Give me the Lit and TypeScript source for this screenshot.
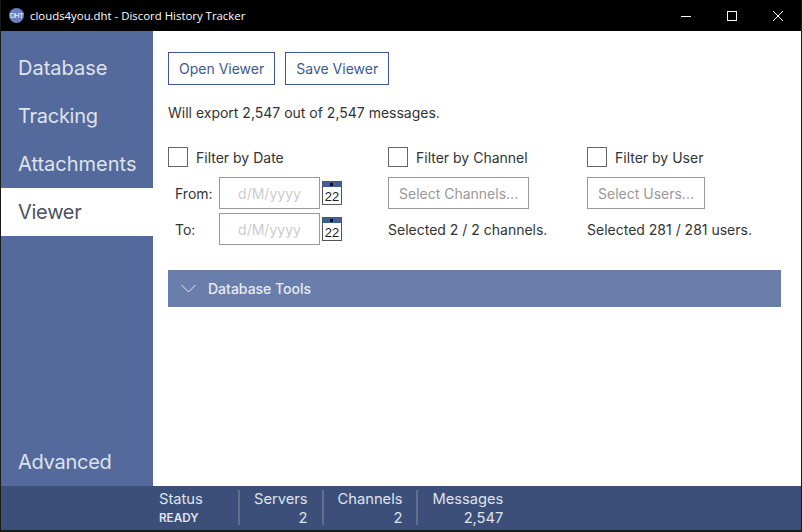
import { LitElement, html, css } from 'lit';
import { customElement } from 'lit/decorators.js';

const calendar = html`
  <svg class="calendar" width="20" height="24" viewBox="0 0 20 24">
    <rect x="0.5" y="0.5" width="19" height="23" fill="#fff" stroke="#555"></rect>
    <rect x="1" y="1" width="18" height="5" fill="#3f5f99"></rect>
    <rect x="8" y="2" width="3" height="3" fill="#111"></rect>
    <text x="10" y="20" text-anchor="middle">22</text>
  </svg>
`;

@customElement('app-root')
export class AppRoot extends LitElement {
  static styles = css`
    :host {
      display: flex;
      flex-direction: column;
      width: 802px;
      height: 532px;
      box-sizing: border-box;
      border: 1px solid #1a1a1a;
      border-top: 0;
      background: #000;
      overflow: hidden;
      font-family: Inter, 'Noto Sans', sans-serif;
      font-size: 14px;
      color: #333;
    }

    .titlebar {
      display: flex;
      align-items: center;
      height: 31px;
      flex: none;
      background: #000;
      color: #fff;
      font-family: 'Open Sans', 'Noto Sans', sans-serif;
      font-size: 11.4px;
    }

    .logo {
      display: flex;
      align-items: center;
      justify-content: center;
      width: 15px;
      height: 15px;
      margin: 0 6px 0 8px;
      border-radius: 50%;
      background: #6a7fc0;
      font-family: 'Liberation Sans', sans-serif;
      font-size: 7px;
      letter-spacing: -0.4px;
      color: #fff;
    }

    .title {
      flex: 1;
    }

    .winbtn {
      display: flex;
      align-items: center;
      justify-content: center;
      width: 46px;
      height: 31px;
    }

    .main {
      display: flex;
      flex: 1;
      min-height: 0;
      background: #fff;
    }

    .sidebar {
      display: flex;
      flex-direction: column;
      flex: none;
      width: 152px;
      padding-top: 13px;
      box-sizing: border-box;
      background: #546a9c;
    }

    .tab {
      height: 48px;
      line-height: 49px;
      padding-left: 17px;
      font-size: 20px;
      color: #dfe3ec;
    }

    .tab.active {
      background: #fff;
      color: #4b5163;
    }

    /* the reference kerns these tighter than the installed Inter */
    .tab.tight {
      letter-spacing: -0.27px;
    }

    .spacer {
      flex: 1;
    }

    .content {
      flex: 1;
      padding: 21px 20px 0 15px;
    }

    .buttons {
      display: flex;
      gap: 10px;
    }

    .btn {
      height: 33px;
      line-height: 31px;
      box-sizing: border-box;
      padding: 0 10px;
      border: 1px solid #3c5a96;
      color: #3c5a8c;
    }

    .summary {
      margin-top: 19px;
      line-height: 17px;
    }

    .filters {
      display: flex;
      margin-top: 26px;
    }

    .filter {
      display: flex;
      flex-direction: column;
    }

    .filter.date {
      width: 220px;
    }

    .filter.channel {
      width: 199px;
    }

    .check {
      display: flex;
      align-items: center;
      gap: 8px;
      height: 20px;
    }

    .box {
      width: 20px;
      height: 20px;
      box-sizing: border-box;
      border: 1px solid #666;
    }

    .date-row {
      display: flex;
      align-items: center;
      height: 32px;
      margin-top: 4px;
    }

    .check + .date-row {
      margin-top: 10px;
    }

    .date-row label {
      width: 51px;
      padding-left: 7px;
      box-sizing: border-box;
    }

    .date-input {
      width: 101px;
      height: 32px;
      line-height: 31px;
      box-sizing: border-box;
      border: 1px solid #999;
      text-align: center;
      color: #ccc;
    }

    .calendar {
      margin-left: 2px;
    }

    .calendar text {
      font-family: 'Liberation Sans', sans-serif;
      font-size: 13px;
      fill: #222;
    }

    .select {
      align-self: flex-start;
      height: 32px;
      line-height: 31px;
      margin-top: 10px;
      padding: 0 10px;
      box-sizing: border-box;
      border: 1px solid #999;
      color: #999;
    }

    .count {
      margin-top: 12px;
      line-height: 17px;
    }

    .expander {
      display: flex;
      align-items: center;
      gap: 12px;
      height: 37px;
      margin-top: 25px;
      padding-left: 13px;
      background: #6a7eac;
      font-weight: 500;
      color: #e8ebf2;
    }

    .statusbar {
      display: flex;
      flex: none;
      height: 45px;
      box-sizing: border-box;
      padding: 3px 0 0 152px;
      background: #3c4f78;
      border-top: 1px solid #3c4f78;
      border-bottom: 1px solid #1a1a1a;
      font-size: 14.7px;
      color: #dfe3ec;
    }

    .stat {
      display: flex;
      flex-direction: column;
      height: 35px;
      box-sizing: border-box;
      padding: 1px 14px 0 14px;
      border-left: 2px solid #5f7094;
      line-height: 17px;
    }

    .stat:first-child {
      border-left: 0;
      width: 85px;
      padding: 1px 0 0 6px;
    }

    .stat .value {
      margin-top: 2px;
      text-align: right;
    }

    .stat .state {
      margin-top: 2px;
      font-size: 11.7px;
      font-weight: 600;
    }
  `;

  render() {
    return html`
      <div class="titlebar">
        <div class="logo">DHT</div>
        <div class="title">clouds4you.dht - Discord History Tracker</div>
        <div class="winbtn">
          <svg width="10" height="10" viewBox="0 0 10 10"><path d="M0 5.5h10" stroke="#fff" fill="none"></path></svg>
        </div>
        <div class="winbtn">
          <svg width="10" height="10" viewBox="0 0 10 10"><rect x="0.5" y="0.5" width="9" height="9" stroke="#fff" fill="none"></rect></svg>
        </div>
        <div class="winbtn">
          <svg width="10" height="10" viewBox="0 0 10 10"><path d="M0 0L10 10M10 0L0 10" stroke="#fff" fill="none"></path></svg>
        </div>
      </div>
      <div class="main">
        <nav class="sidebar">
          <div class="tab">Database</div>
          <div class="tab tight">Tracking</div>
          <div class="tab">Attachments</div>
          <div class="tab active tight">Viewer</div>
          <div class="spacer"></div>
          <div class="tab tight">Advanced</div>
        </nav>
        <div class="content">
          <div class="buttons">
            <div class="btn">Open Viewer</div>
            <div class="btn">Save Viewer</div>
          </div>
          <div class="summary">Will export 2,547 out of 2,547 messages.</div>
          <div class="filters">
            <div class="filter date">
              <div class="check"><div class="box"></div>Filter by Date</div>
              <div class="date-row"><label>From:</label><div class="date-input">d/M/yyyy</div>${calendar}</div>
              <div class="date-row"><label>To:</label><div class="date-input">d/M/yyyy</div>${calendar}</div>
            </div>
            <div class="filter channel">
              <div class="check"><div class="box"></div>Filter by Channel</div>
              <div class="select">Select Channels...</div>
              <div class="count">Selected 2 / 2 channels.</div>
            </div>
            <div class="filter">
              <div class="check"><div class="box"></div>Filter by User</div>
              <div class="select">Select Users...</div>
              <div class="count">Selected 281 / 281 users.</div>
            </div>
          </div>
          <div class="expander">
            <svg width="15" height="9" viewBox="0 0 15 9"><path d="M0.5 1L7.5 8L14.5 1" stroke="#e8ebf2" fill="none"></path></svg>
            Database Tools
          </div>
        </div>
      </div>
      <div class="statusbar">
        <div class="stat"><span>Status</span><span class="state">READY</span></div>
        <div class="stat"><span>Servers</span><span class="value">2</span></div>
        <div class="stat"><span>Channels</span><span class="value">2</span></div>
        <div class="stat"><span>Messages</span><span class="value">2,547</span></div>
      </div>
    `;
  }
}
